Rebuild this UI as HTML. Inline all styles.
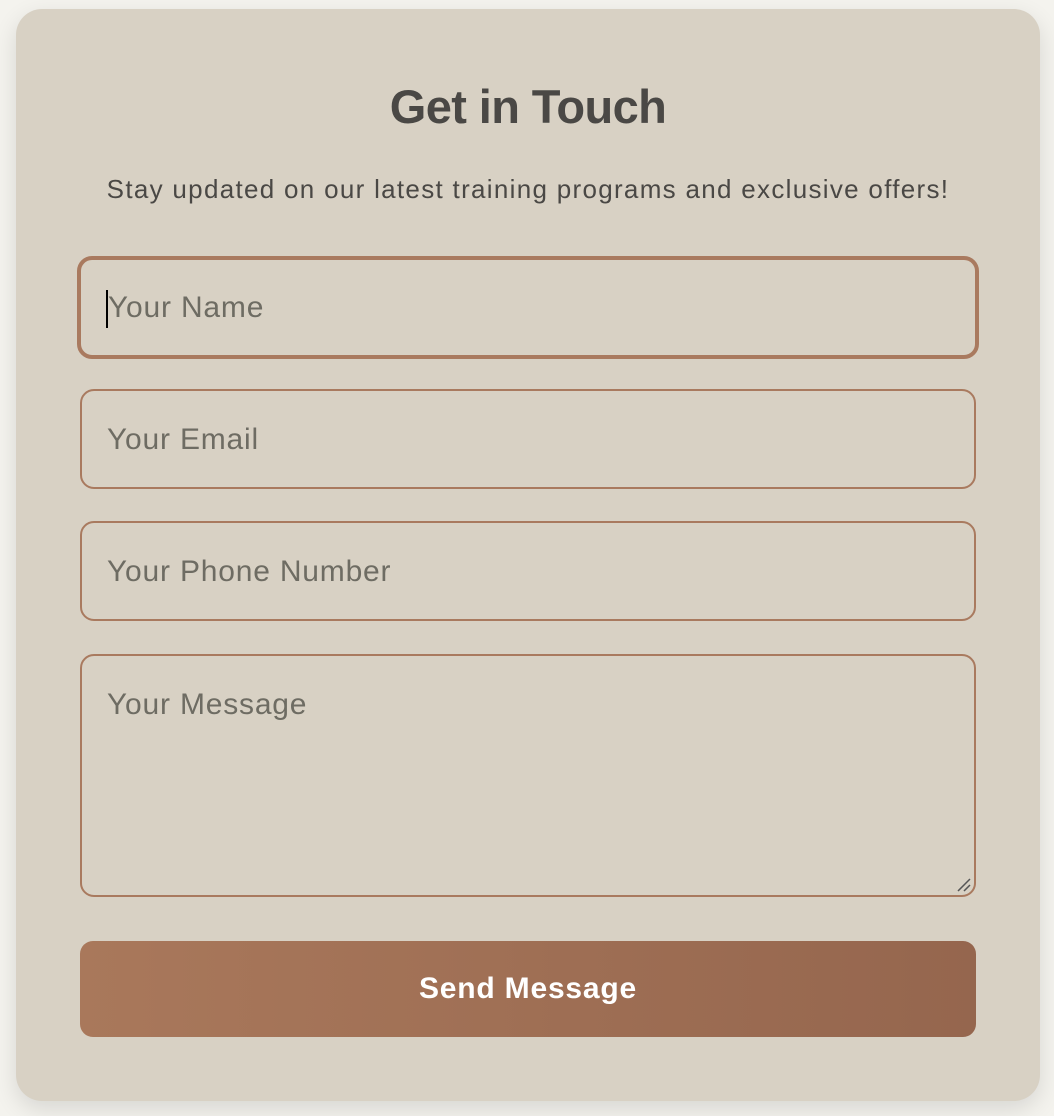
<!DOCTYPE html>
<html><head><meta charset="utf-8"><style>
html,body{margin:0;padding:0;width:1054px;height:1116px;background:#f4f3ee;overflow:hidden;font-family:"Liberation Sans",sans-serif;}
.card{position:absolute;left:16px;top:9px;width:1024px;height:1092px;background:#d8d1c4;border-radius:26px;box-shadow:0 8px 24px rgba(0,0,0,0.12);}
h1{position:absolute;left:0;width:100%;top:70px;margin:0;text-align:center;font-size:47px;font-weight:bold;color:#4a4845;letter-spacing:-0.6px;line-height:56px;}
.sub{position:absolute;left:0;width:100%;top:165px;text-align:center;font-size:26px;color:#4a4845;line-height:30px;letter-spacing:1.3px;}
.f{position:absolute;left:64px;width:896px;border:2px solid #a97a5f;border-radius:14px;box-sizing:border-box;}
.f span{position:absolute;left:25px;font-size:30px;color:#6e6c63;letter-spacing:0.8px;}
.btn{position:absolute;left:64px;top:932px;width:896px;height:96px;border-radius:13px;background:linear-gradient(90deg,#a9785b,#95664e);color:#fff;font-weight:bold;font-size:30px;letter-spacing:0.8px;text-align:center;line-height:96px;}
</style></head><body>
<div class="card">
<h1>Get in Touch</h1>
<div class="sub">Stay updated on our latest training programs and exclusive offers!</div>
<div class="f" style="top:247px;height:103px;border:4px solid #a97a5f;border-radius:15px;left:61px;width:902px;"><span style="top:31px;left:27px">Your Name</span><div style="position:absolute;left:25px;top:30px;width:2px;height:38px;background:#000"></div></div>
<div class="f" style="top:380px;height:100px;"><span style="top:32px">Your Email</span></div>
<div class="f" style="top:512px;height:100px;"><span style="top:32px">Your Phone Number</span></div>
<div class="f" style="top:645px;height:243px;"><span style="top:32px">Your Message</span>
<svg style="position:absolute;right:2px;bottom:2px" width="16" height="16"><path d="M2 14L14 2M8 14L14 8" stroke="#555" stroke-width="1.5"/></svg></div>
<div class="btn">Send Message</div>
</div>
</body></html>
